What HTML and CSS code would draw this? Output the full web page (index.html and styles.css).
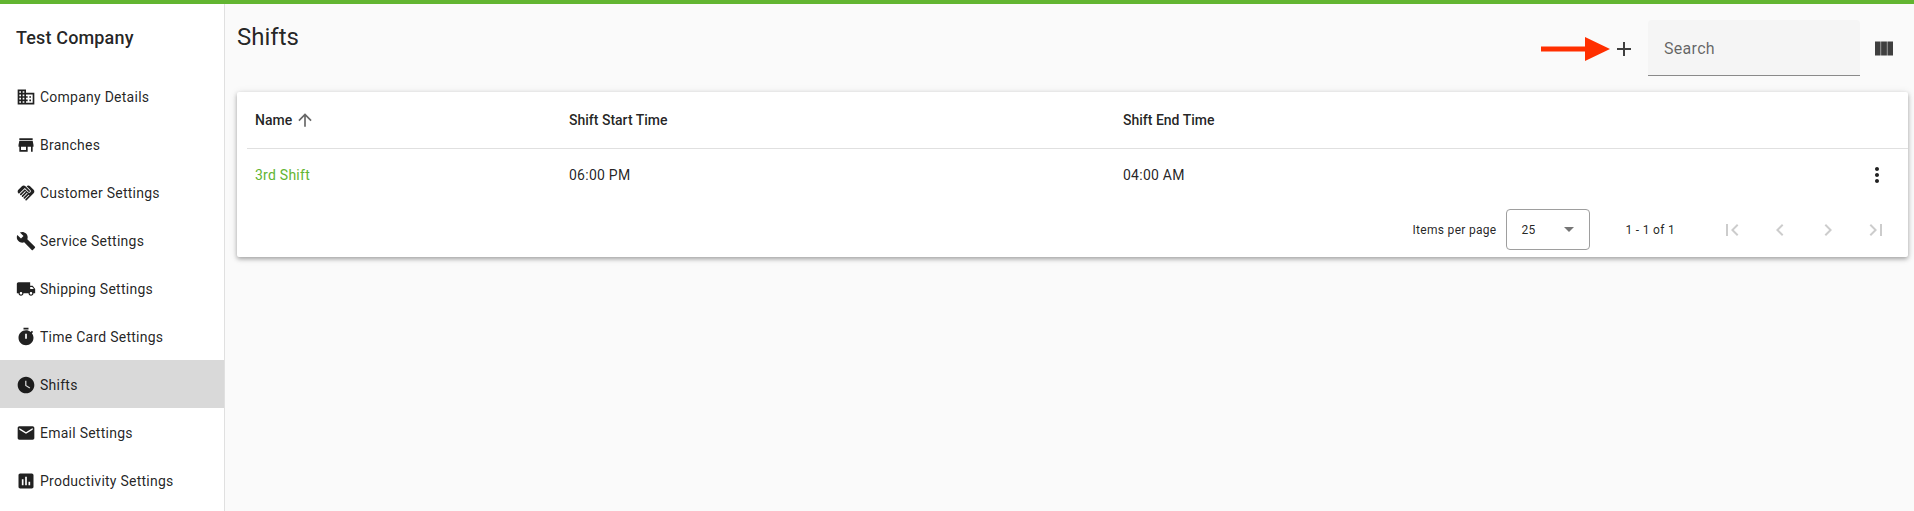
FILE: index.html
```html
<!DOCTYPE html>
<html>
<head>
    <title>Shifts</title>
    <meta name="viewport" content="width=device-width, initial-scale=1.0">
    <link rel="stylesheet" href="styles.css">
</head>
<body>
    <div class="top-bar"></div>
    <div class="layout">
        <nav class="sidebar">
            <h2 class="company">Test Company</h2>
            <a class="nav-item">
                <svg class="nav-icon" viewBox="0 0 24 24"><path d="M12 7V3H2v18h20V7H12zM6 19H4v-2h2v2zm0-4H4v-2h2v2zm0-4H4V9h2v2zm0-4H4V5h2v2zm4 12H8v-2h2v2zm0-4H8v-2h2v2zm0-4H8V9h2v2zm0-4H8V5h2v2zm10 12h-8v-2h2v-2h-2v-2h2v-2h-2V9h8v10zm-2-8h-2v2h2v-2zm0 4h-2v2h2v-2z"/></svg>
                Company Details
            </a>
            <a class="nav-item">
                <svg class="nav-icon" viewBox="0 0 24 24"><path d="M20 4H4v2h16V4zm1 10v-2l-1-5H4l-1 5v2h1v6h10v-6h4v6h2v-6h1zm-9 4H6v-4h6v4z"/></svg>
                Branches
            </a>
            <a class="nav-item">
                <svg class="nav-icon" viewBox="0 0 24 24"><path d="M16.48 10.41c-.39.39-1.04.39-1.43 0l-4.47-4.46-7.05 7.04-.66-.63c-1.17-1.17-1.17-3.07 0-4.24l4.24-4.24c1.17-1.17 3.07-1.17 4.24 0L16.48 9c.39.39.39 1.02 0 1.41zm.7-2.12c.78.78.78 2.05 0 2.83-1.27 1.27-2.61.22-2.83 0l-3.76-3.76-5.57 5.57c-.39.39-.39 1.02 0 1.41.39.39 1.02.39 1.42 0l4.62-4.62.71.71-4.62 4.62c-.39.39-.39 1.02 0 1.41.39.39 1.02.39 1.42 0l4.62-4.62.71.71-4.62 4.62c-.39.39-.39 1.02 0 1.41.39.39 1.02.39 1.41 0l4.62-4.62.71.71-4.62 4.62c-.39.39-.39 1.02 0 1.41.39.39 1.02.39 1.41 0l8.32-8.34c1.17-1.17 1.17-3.07 0-4.24l-4.24-4.24c-1.15-1.15-3.01-1.17-4.18-.06l4.18 4.17z"/></svg>
                Customer Settings
            </a>
            <a class="nav-item">
                <svg class="nav-icon" viewBox="0 0 24 24"><path d="M22.7 19l-9.1-9.1c.9-2.3.4-5-1.5-6.9-2-2-5-2.4-7.4-1.3L9 6 6 9 1.6 4.7C.4 7.1.9 10.1 2.9 12.1c1.9 1.9 4.6 2.4 6.9 1.5l9.1 9.1c.4.4 1 .4 1.4 0l2.3-2.3c.5-.4.5-1.1.1-1.4z"/></svg>
                Service Settings
            </a>
            <a class="nav-item">
                <svg class="nav-icon" viewBox="0 0 24 24"><path d="M20 8h-3V4H3c-1.1 0-2 .9-2 2v11h2c0 1.66 1.34 3 3 3s3-1.34 3-3h6c0 1.66 1.34 3 3 3s3-1.34 3-3h2v-5l-3-4zM6 18.5c-.83 0-1.5-.67-1.5-1.5s.67-1.5 1.5-1.5 1.5.67 1.5 1.5-.67 1.5-1.5 1.5zm13.5-9l1.96 2.5H17V9.5h2.5zm-1.5 9c-.83 0-1.5-.67-1.5-1.5s.67-1.5 1.5-1.5 1.5.67 1.5 1.5-.67 1.5-1.5 1.5z"/></svg>
                Shipping Settings
            </a>
            <a class="nav-item">
                <svg class="nav-icon" viewBox="0 0 24 24"><path fill-rule="evenodd" d="M9 1h6v2H9zM19.03 7.39l1.42-1.42c-.43-.51-.9-.99-1.41-1.41l-1.42 1.42C16.07 4.74 14.12 4 12 4c-4.97 0-9 4.03-9 9s4.02 9 9 9 9-4.03 9-9c0-2.12-.74-4.07-1.97-5.61zM13 14h-2V8h2v6z"/></svg>
                Time Card Settings
            </a>
            <a class="nav-item active">
                <svg class="nav-icon" viewBox="0 0 24 24"><path d="M12 2C6.5 2 2 6.5 2 12s4.5 10 10 10 10-4.5 10-10S17.5 2 12 2zm4.2 14.2L11 13V7h1.5v5.2l4.5 2.7-.8 1.3z"/></svg>
                Shifts
            </a>
            <a class="nav-item">
                <svg class="nav-icon" viewBox="0 0 24 24"><path d="M20 4H4c-1.1 0-1.99.9-1.99 2L2 18c0 1.1.9 2 2 2h16c1.1 0 2-.9 2-2V6c0-1.1-.9-2-2-2zm0 4l-8 5-8-5V6l8 5 8-5v2z"/></svg>
                Email Settings
            </a>
            <a class="nav-item">
                <svg class="nav-icon" viewBox="0 0 24 24"><path d="M19 3H5c-1.1 0-2 .9-2 2v14c0 1.1.9 2 2 2h14c1.1 0 2-.9 2-2V5c0-1.1-.9-2-2-2zM9 17H7v-7h2v7zm4 0h-2V7h2v10zm4 0h-2v-4h2v4z"/></svg>
                Productivity Settings
            </a>
        </nav>

        <main class="content">
            <div class="toolbar">
                <h1 class="page-title">Shifts</h1>
                <div class="toolbar-actions">
                    <svg class="callout-arrow" viewBox="0 0 69 24"><path d="M0 9.5l44 0V0l25 12-25 12v-9.5L0 14.500z"/></svg>
                    <svg class="action-icon add-icon" viewBox="0 0 24 24"><path d="M19 13h-6v6h-2v-6H5v-2h6V5h2v6h6v2z"/></svg>
                    <div class="search-box">Search</div>
                    <svg class="action-icon" viewBox="0 0 24 24"><path d="M4 4.500h5.600v14H4zM10.100 4.500h5.800v14h-5.800zM16.400 4.500H22v14h-5.600z"/></svg>
                </div>
            </div>

            <div class="card">
                <div class="table-row table-head">
                    <div class="col-name">Name
                        <svg class="sort-icon" viewBox="0 0 24 24"><path d="M4 12l1.410 1.410L11 7.830V20h2V7.830l5.580 5.590L20 12l-8-8-8 8z"/></svg>
                    </div>
                    <div class="col-start">Shift Start Time</div>
                    <div class="col-end">Shift End Time</div>
                </div>
                <div class="table-row table-body">
                    <div class="col-name shift-link">3rd Shift</div>
                    <div class="col-start">06:00 PM</div>
                    <div class="col-end">04:00 AM</div>
                    <svg class="row-menu" viewBox="0 0 24 24"><path d="M12 8c1.100 0 2-.9 2-2s-.9-2-2-2-2 .9-2 2 .9 2 2 2zm0 2c-1.100 0-2 .9-2 2s.9 2 2 2 2-.9 2-2-.9-2-2-2zm0 6c-1.100 0-2 .9-2 2s.9 2 2 2 2-.9 2-2-.9-2-2-2z"/></svg>
                </div>
                <div class="paginator">
                    <span class="per-page-label">Items per page</span>
                    <div class="per-page-select">
                        <span>25</span>
                        <span class="select-arrow"></span>
                    </div>
                    <span class="range-label">1 - 1 of 1</span>
                    <div class="page-buttons">
                        <svg class="page-btn" viewBox="0 0 24 24"><path d="M18.410 16.590L13.820 12l4.590-4.590L17 6l-6 6 6 6zM6 6h2v12H6z"/></svg>
                        <svg class="page-btn" viewBox="0 0 24 24"><path d="M15.410 7.410L14 6l-6 6 6 6 1.410-1.410L10.830 12z"/></svg>
                        <svg class="page-btn" viewBox="0 0 24 24"><path d="M10 6L8.590 7.410 13.170 12l-4.580 4.590L10 18l6-6z"/></svg>
                        <svg class="page-btn" viewBox="0 0 24 24"><path d="M5.590 7.410L10.180 12l-4.590 4.590L7 18l6-6-6-6zM16 6h2v12h-2z"/></svg>
                    </div>
                </div>
            </div>
        </main>
    </div>
</body>
</html>
```

FILE: styles.css
```css
html, body {
    height: 100%;
}
body {
    font-family: Roboto, "Liberation Sans", sans-serif;
    color: rgba(0, 0, 0, 0.87);
    background-color: #fafafa;
    margin: 0;
    display: flex;
    flex-direction: column;
    overflow: hidden;
}
.top-bar {
    height: 4px;
    flex-shrink: 0;
    background-color: #62b531;
}
.layout {
    display: flex;
    flex: 1;
    min-height: 0;
}

/* sidebar */
.sidebar {
    width: 224px;
    flex-shrink: 0;
    box-sizing: content-box;
    background-color: #ffffff;
    border-right: 1px solid #e0e0e0;
    overflow: hidden;
}
.company {
    margin: 0;
    height: 68px;
    padding: 0 16px;
    font-size: 18px;
    font-weight: 500;
    letter-spacing: 0.15px;
    line-height: 67px;
}
.nav-item {
    box-sizing: border-box;
    display: flex;
    align-items: center;
    height: 48px;
    padding: 1px 0 0 16px;
    gap: 4px;
    font-size: 14px;
    letter-spacing: 0.25px;
}
.nav-item.active {
    background-color: #d9d9d9;
}
.nav-icon {
    width: 20px;
    height: 20px;
    flex-shrink: 0;
    fill: rgba(0, 0, 0, 0.87);
}

/* main area */
.content {
    flex: 1;
    min-width: 0;
    padding: 0 6px 0 12px;
}
.toolbar {
    display: flex;
    justify-content: space-between;
    align-items: flex-start;
    height: 72px;
    padding-top: 16px;
}
.page-title {
    margin: 1px 0 0;
    font-size: 24px;
    font-weight: 400;
    line-height: 32px;
}
.toolbar-actions {
    display: flex;
    align-items: center;
    height: 56px;
    padding-right: 13px;
}
.callout-arrow {
    width: 69px;
    height: 24px;
    margin-top: 1px;
    fill: #ff2f00;
}
.action-icon {
    width: 24px;
    height: 24px;
    margin-top: 1px;
    fill: rgba(0, 0, 0, 0.75);
}
.add-icon {
    margin-left: 2px;
}
.search-box {
    box-sizing: border-box;
    width: 212px;
    height: 56px;
    margin: 0 11px 0 12px;
    padding: 0 16px;
    background-color: #f5f5f5;
    border-bottom: 1px solid #8a8a8a;
    border-radius: 4px 4px 0 0;
    color: rgba(0, 0, 0, 0.6);
    font-size: 16px;
    letter-spacing: 0.3px;
    line-height: 57px;
}

/* table card */
.card {
    height: 165px;
    background-color: #ffffff;
    border-radius: 2px;
    box-shadow: 0 2px 4px rgba(0, 0, 0, 0.3), 0 1px 8px rgba(0, 0, 0, 0.1);
    font-size: 14px;
}
.table-row {
    display: flex;
    align-items: center;
    padding-left: 18px;
}
.table-head {
    box-sizing: border-box;
    height: 57px;
    margin-left: 10px;
    padding-left: 8px;
    border-bottom: 1px solid #e0e0e0;
    font-weight: 500;
}
.table-body {
    box-sizing: border-box;
    height: 50px;
    padding-top: 2px;
    letter-spacing: 0.25px;
}
.col-name {
    display: flex;
    align-items: center;
    gap: 3px;
    width: 314px;
}
.col-start {
    width: 554px;
}
.shift-link {
    color: #62b531;
}
.sort-icon {
    width: 20px;
    height: 20px;
    fill: rgba(0, 0, 0, 0.6);
}
.row-menu {
    width: 24px;
    height: 24px;
    margin-left: auto;
    margin-right: 19px;
    fill: rgba(0, 0, 0, 0.87);
}

/* paginator */
.paginator {
    display: flex;
    align-items: center;
    justify-content: flex-end;
    height: 41px;
    margin-top: 10px;
    padding-right: 20px;
    font-size: 12px;
    letter-spacing: 0.3px;
}
.per-page-select {
    box-sizing: border-box;
    display: flex;
    align-items: center;
    justify-content: space-between;
    width: 84px;
    height: 41px;
    margin-left: 9px;
    padding: 0 15px;
    border: 1px solid #9e9e9e;
    border-radius: 4px;
}
.select-arrow {
    width: 0;
    height: 0;
    border-left: 5px solid transparent;
    border-right: 5px solid transparent;
    border-top: 5px solid rgba(0, 0, 0, 0.54);
}
.range-label {
    margin-left: 36px;
    margin-right: 45px;
}
.page-buttons {
    display: flex;
    gap: 24px;
}
.page-btn {
    width: 24px;
    height: 24px;
    fill: rgba(0, 0, 0, 0.2);
}
```
